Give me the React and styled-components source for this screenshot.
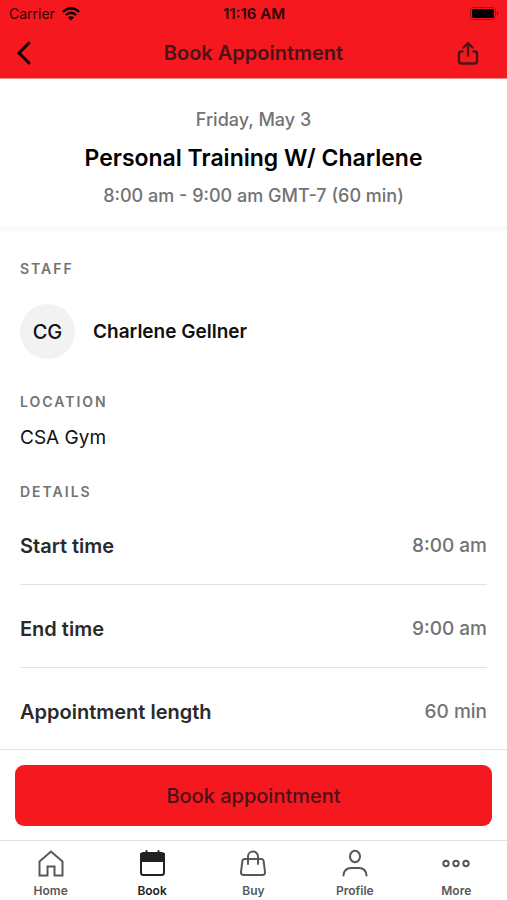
import React from 'react';
import styled, { createGlobalStyle } from 'styled-components';

const BRAND = '#f5191f';
const ON_BRAND = '#4b1218';
const TEXT = '#2a2a2c';
const MUTED = '#717375';
const LINE = '#e2e2e3';

const GlobalStyle = createGlobalStyle`
  *,
  *::before,
  *::after {
    box-sizing: border-box;
  }
  body {
    margin: 0;
    background: #fff;
    color: ${TEXT};
    font-family: Inter, 'Liberation Sans', sans-serif;
  }
  h1, h2, h3, p, dl, dt, dd {
    margin: 0;
  }
  button {
    padding: 0;
    border: 0;
    background: none;
    color: inherit;
    font: inherit;
    cursor: pointer;
  }
`;

const Screen = styled.div`
  display: flex;
  flex-direction: column;
  min-height: 100vh;
`;

const Header = styled.header`
  background: ${BRAND};
  border-bottom: 1px solid #f2888b;
`;

const StatusBar = styled.div`
  display: grid;
  grid-template-columns: 1fr auto 1fr;
  align-items: center;
  height: 27px;
  padding: 0 8px 0 9px;
  color: #000;
  font-size: 14px;
`;

const Carrier = styled.span`
  display: flex;
  align-items: center;
  gap: 7px;
  color: #2c0508;
`;

const Clock = styled.time`
  color: #2c0508;
  font-size: 15px;
  font-weight: 600;
`;

const Battery = styled.svg`
  justify-self: end;
`;

const TitleBar = styled.div`
  display: grid;
  grid-template-columns: 32px 1fr 32px;
  align-items: center;
  height: 51px;
  padding: 0 23px 0 8px;
`;

const ScreenTitle = styled.h1`
  padding-left: 15px;
  color: ${ON_BRAND};
  font-size: 20px;
  font-weight: 600;
  line-height: 24px;
  text-align: center;
`;

const IconButton = styled.button`
  display: flex;
  align-items: center;
  justify-content: center;
  height: 32px;
  color: ${(props) => props.$color};
`;

const Summary = styled.section`
  padding: 29px 20px 18px;
  border-bottom: 5px solid #f8f9f9;
  text-align: center;
`;

const SummaryLine = styled.p`
  color: ${MUTED};
  font-size: 18px;
  font-weight: 500;
  line-height: 24px;
`;

const SummaryTitle = styled.h2`
  margin: 12px 0;
  color: #000;
  font-size: 23px;
  font-weight: 600;
  line-height: 28px;
`;

const Body = styled.main`
  flex: 1;
  padding: 28px 20px 0;
`;

const Section = styled.section`
  margin-bottom: ${(props) => props.$space || 0};
`;

const SectionLabel = styled.h3`
  color: ${MUTED};
  font-size: 14px;
  font-weight: 600;
  letter-spacing: 2px;
  line-height: 20px;
  text-transform: uppercase;
`;

const Staff = styled.div`
  display: flex;
  align-items: center;
  gap: 18px;
  margin-top: 25px;
`;

const Avatar = styled.span`
  display: flex;
  align-items: center;
  justify-content: center;
  width: 55px;
  height: 55px;
  border-radius: 50%;
  background: #f1f3f3;
  color: #111;
  font-size: 20px;
  font-weight: 500;
`;

const StaffName = styled.p`
  color: #111;
  font-size: 19px;
  font-weight: 600;
`;

const Location = styled.p`
  margin-top: 14px;
  color: #111;
  font-size: 19px;
  line-height: 24px;
`;

const Row = styled.div`
  display: flex;
  justify-content: space-between;
  padding: 32px 0 26px;
  border-bottom: 1px solid ${LINE};
  line-height: 24px;
  &:last-child {
    padding-bottom: 12px;
    border-bottom: 0;
  }
`;

const RowLabel = styled.dt`
  font-size: 20px;
  font-weight: 600;
`;

const RowValue = styled.dd`
  color: ${MUTED};
  font-size: 19px;
  font-weight: 500;
`;

const Footer = styled.footer`
  position: sticky;
  bottom: 0;
  background: #fff;
`;

const Action = styled.div`
  padding: 15px 15px 14px;
  border-top: 1px solid ${LINE};
`;

const BookButton = styled.button`
  display: block;
  width: 100%;
  height: 61px;
  border-radius: 9px;
  background: ${BRAND};
  color: ${ON_BRAND};
  font-size: 20px;
  font-weight: 500;
`;

const TabBar = styled.nav`
  display: grid;
  grid-template-columns: repeat(5, 1fr);
  height: 60px;
  border-top: 1px solid ${LINE};
`;

const Tab = styled.a`
  display: flex;
  flex-direction: column;
  align-items: center;
  gap: 4px;
  padding-top: 6px;
  color: ${(props) => (props.$active ? '#202123' : '#56585b')};
  font-size: 12px;
  font-weight: 600;
  line-height: 16px;
  text-decoration: none;
`;

const TabIcon = styled.svg`
  width: 32px;
  height: 32px;
  fill: none;
  stroke: currentColor;
  stroke-width: 2;
  stroke-linecap: round;
  stroke-linejoin: round;
`;

const details = [
  { label: 'Start time', value: '8:00 am' },
  { label: 'End time', value: '9:00 am' },
  { label: 'Appointment length', value: '60 min' },
];

const tabs = [
  {
    name: 'Home',
    icon: (
      <path d="M4.500 28.500V14.500L16 4.500l11.500 10v14h-8v-9h-7v9z" strokeLinecap="butt" strokeLinejoin="miter" />
    ),
  },
  {
    name: 'Book',
    active: true,
    icon: (
      <>
        <rect x="5" y="6" width="23" height="22" rx="2.500" />
        <path d="M5 7h23v7H5z" fill="currentColor" />
        <path d="M10.500 4v3M22.500 4v3" />
      </>
    ),
  },
  {
    name: 'Buy',
    icon: (
      <>
        <path d="M7.500 12h17q1.800 0 2.100 1.800l1.400 11.200q.3 3-2.700 3H6.700q-3 0-2.700-3l1.400-11.200Q5.700 12 7.500 12z" />
        <path d="M11 17V9.500a5 5 0 0 1 10 0V17" />
      </>
    ),
  },
  {
    name: 'Profile',
    icon: (
      <>
        <ellipse cx="16" cy="9.500" rx="5" ry="5.700" />
        <path d="M4.500 28.500C5 23 8 21 12 21h8c4 0 7 2 7.500 7.500" />
      </>
    ),
  },
  {
    name: 'More',
    icon: (
      <>
        <circle cx="6" cy="16.500" r="2.700" />
        <circle cx="16" cy="16.500" r="2.700" />
        <circle cx="26" cy="16.500" r="2.700" />
      </>
    ),
  },
];

const WifiIcon = () => (
  <svg width="18" height="14" viewBox="0 0 18 14" fill="none" stroke="#000" strokeWidth="2.300" aria-hidden="true">
    <path d="M.9 4.900Q9-2.300 17.100 4.900M3.900 8Q9 3.600 14.100 8" />
    <path d="M9 13.600 5.900 10.500Q9 7.800 12.100 10.500z" fill="#000" stroke="none" />
  </svg>
);

const BatteryIcon = () => (
  <Battery width="29" height="14" viewBox="0 0 29 14" aria-hidden="true">
    <rect x=".5" y=".5" width="25" height="12" rx="3" fill="none" stroke="#9c1015" />
    <rect x="2" y="2" width="22" height="9" rx="1.500" fill="#000" />
    <path d="M27 4.500q2 2 0 4z" fill="#6c0b0f" />
  </Battery>
);

const BackIcon = () => (
  <svg width="16" height="24" viewBox="0 0 16 24" fill="none" stroke="currentColor" strokeWidth="3" strokeLinecap="round" aria-hidden="true">
    <path d="M13 2 3 12l10 10" strokeLinejoin="miter" />
  </svg>
);

const ShareIcon = () => (
  <svg width="22" height="24" viewBox="0 0 22 24" fill="none" stroke="currentColor" strokeWidth="2.400" strokeLinecap="round" strokeLinejoin="round" aria-hidden="true">
    <path d="M11 14.500V2.500M6.500 6.500 11 2l4.500 4.500M5.500 10.500H4q-2 0-2 2v7.500q0 2.500 2.500 2.500h13q2.500 0 2.500-2.500v-7.500q0-2-2-2h-1.500" />
  </svg>
);

const App = () => (
  <Screen>
    <GlobalStyle />
    <Header>
      <StatusBar>
        <Carrier>
          Carrier
          <WifiIcon />
        </Carrier>
        <Clock>11:16 AM</Clock>
        <BatteryIcon />
      </StatusBar>
      <TitleBar>
        <IconButton type="button" aria-label="Back" $color="#120002">
          <BackIcon />
        </IconButton>
        <ScreenTitle>Book Appointment</ScreenTitle>
        <IconButton type="button" aria-label="Share" $color={ON_BRAND}>
          <ShareIcon />
        </IconButton>
      </TitleBar>
    </Header>
    <Summary>
      <SummaryLine>Friday, May 3</SummaryLine>
      <SummaryTitle>Personal Training W/ Charlene</SummaryTitle>
      <SummaryLine>8:00 am - 9:00 am GMT-7 (60 min)</SummaryLine>
    </Summary>
    <Body>
      <Section $space="33px">
        <SectionLabel>Staff</SectionLabel>
        <Staff>
          <Avatar>CG</Avatar>
          <StaffName>Charlene Gellner</StaffName>
        </Staff>
      </Section>
      <Section $space="32px">
        <SectionLabel>Location</SectionLabel>
        <Location>CSA Gym</Location>
      </Section>
      <Section>
        <SectionLabel>Details</SectionLabel>
        <dl>
          {details.map(({ label, value }) => (
            <Row key={label}>
              <RowLabel>{label}</RowLabel>
              <RowValue>{value}</RowValue>
            </Row>
          ))}
        </dl>
      </Section>
    </Body>
    <Footer>
      <Action>
        <BookButton type="button">Book appointment</BookButton>
      </Action>
      <TabBar>
        {tabs.map(({ name, icon, active }) => (
          <Tab key={name} href={`#${name.toLowerCase()}`} $active={active} aria-current={active ? 'page' : undefined}>
            <TabIcon viewBox="0 0 32 32" aria-hidden="true">{icon}</TabIcon>
            {name}
          </Tab>
        ))}
      </TabBar>
    </Footer>
  </Screen>
);

export default App;
